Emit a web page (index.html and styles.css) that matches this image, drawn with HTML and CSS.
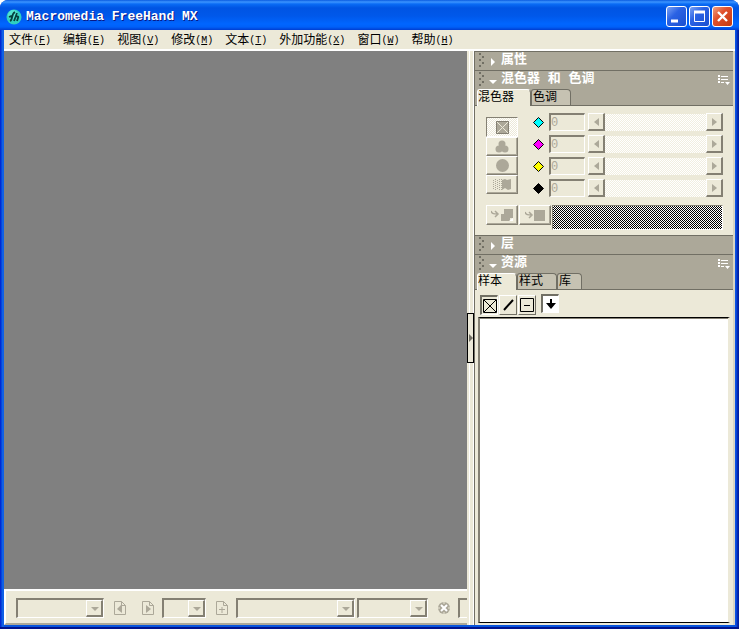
FILE: index.html
```html
<!DOCTYPE html>
<html lang="zh-CN">
<head>
<meta charset="utf-8">
<title>Macromedia FreeHand MX</title>
<link rel="stylesheet" href="styles.css">
</head>
<body>
<div class="window">
  <header class="titlebar">
    <svg class="logo" width="16" height="16" viewBox="0 0 16 16"><circle cx="8" cy="8" r="7.5" fill="#2fd0c0"/><circle cx="7" cy="6" r="5" fill="#6ff0dc" opacity=".6"/><path d="M3 8c2-1 3-1 4-1M4 12c3-1 1-7 5-9M8 12l3-8M9 8c2-1 4-1 3 1l-1 3" fill="none" stroke="#06403c" stroke-width="1.8"/></svg>
    <h1>Macromedia FreeHand MX</h1>
    <button class="caption" aria-label="最小化"><svg width="19" height="19"><path d="M4 14h7" stroke="#fff" stroke-width="3"/></svg></button>
    <button class="caption" aria-label="最大化"><svg width="19" height="19"><path d="M4.500 5v9.500h10V5" fill="none" stroke="#fff"/><path d="M4 5h11" stroke="#fff" stroke-width="3"/></svg></button>
    <button class="caption close" aria-label="关闭"><svg width="19" height="19"><path d="M5 5l9 9M14 5l-9 9" stroke="#fff" stroke-width="2.400"/></svg></button>
  </header>
  <nav class="menubar">
    <a href="#">文件<span>(<u>F</u>)</span></a>
    <a href="#">编辑<span>(<u>E</u>)</span></a>
    <a href="#">视图<span>(<u>V</u>)</span></a>
    <a href="#">修改<span>(<u>M</u>)</span></a>
    <a href="#">文本<span>(<u>T</u>)</span></a>
    <a href="#">外加功能<span>(<u>X</u>)</span></a>
    <a href="#">窗口<span>(<u>W</u>)</span></a>
    <a href="#">帮助<span>(<u>H</u>)</span></a>
  </nav>
  <div class="work">
    <main class="stage">
      <div class="canvas"></div>
      <div class="toolbar">
        <div class="combo c-large"><select aria-label="对象" disabled></select><svg class="drop" width="17" height="17"><path d="M4 6h8l-4 4z"/></svg></div>
        <button class="tool" aria-label="上一页" disabled><svg width="14" height="16"><path class="page" d="M1.500 1.500h7l4 4v9h-11zM8.500 1.500v4h4"/><path class="ink" d="M9 4v9L4 9z"/></svg></button>
        <button class="tool" aria-label="下一页" disabled><svg width="14" height="16"><path class="page" d="M1.500 1.500h7l4 4v9h-11zM8.500 1.500v4h4"/><path class="ink" d="M5 5v8l5-4z"/></svg></button>
        <div class="combo c-page"><select aria-label="页面" disabled></select><svg class="drop" width="17" height="17"><path d="M4 6h8l-4 4z"/></svg></div>
        <button class="tool" aria-label="添加页面" disabled><svg width="14" height="16"><path class="page" d="M1.500 1.500h7l4 4v9h-11zM8.500 1.500v4h4M4 9.500h6M7 7v6"/></svg></button>
        <div class="combo c-font"><select aria-label="字体" disabled></select><svg class="drop" width="17" height="17"><path d="M4 6h8l-4 4z"/></svg></div>
        <div class="combo c-size"><select aria-label="大小" disabled></select><svg class="drop" width="17" height="17"><path d="M4 6h8l-4 4z"/></svg></div>
        <button class="tool" aria-label="停止" disabled><svg width="14" height="14"><circle cx="7" cy="7" r="6" fill="#aca899"/><path d="M4 4l6 6M10 4l-6 6" stroke="#fff" stroke-width="2"/><path d="M7 0v3M7 11v3M0 7h3M11 7h3" stroke="#ece9d8" stroke-width="1"/></svg></button>
        <div class="combo c-large"><select aria-label="缩放" disabled></select></div>
      </div>
    </main>
    <div class="splitter"><button class="grip" aria-label="折叠面板"><svg width="5" height="8"><path d="M1 0v8l4-4z" fill="#716f64"/></svg></button></div>
    <aside class="dock">
      <section>
        <header class="head"><svg class="dots" width="6" height="16"><path d="M1 1h2v2H1zM4 4h2v2H4zM1 7h2v2H1zM4 10h2v2H4zM1 13h2v2H1z"/></svg><svg class="tri" width="8" height="9"><path d="M2 1v8l4-4z"/></svg><h2>属性</h2></header>
      </section>
      <section>
        <header class="head"><svg class="dots" width="6" height="16"><path d="M1 1h2v2H1zM4 4h2v2H4zM1 7h2v2H1zM4 10h2v2H4zM1 13h2v2H1z"/></svg><svg class="tri" width="8" height="9"><path d="M0 4h8l-4 4z"/></svg><h2>混色器 和 色调</h2>
          <button class="options" aria-label="选项"><svg width="12" height="11"><path d="M0 0h2v2H0zM0 3h2v2H0zM0 6h2v2H0zM3 1h7v1H3zM3 4h7v1H3zM3 7h3v1H3zM7 7h5L9.500 10z" fill="#fff"/></svg></button></header>
        <div class="tabs"><button class="tab on t-mixer">混色器</button><button class="tab t-tint">色调</button></div>
        <div class="mixer">
          <div class="modes">
            <button class="raised pressed" aria-label="CMYK" disabled><svg width="13" height="13"><path d="M0 0h13v13H0z" fill="#aca899"/><path d="M1 1l11 11M12 1L1 12" fill="none" stroke="#ece9d8"/><path d="M.500.500h12v12H.500z" fill="none" stroke="#848073"/></svg></button>
            <button class="raised" aria-label="RGB" disabled><svg width="14" height="13"><g fill="#aca899"><circle cx="7" cy="4" r="3.500"/><circle cx="4" cy="9" r="3.500"/><circle cx="10" cy="9" r="3.500"/></g></svg></button>
            <button class="raised" aria-label="HLS" disabled><svg width="13" height="13"><circle cx="6.500" cy="6.500" r="6.500" fill="#aca899"/></svg></button>
            <button class="raised" aria-label="系统颜色" disabled><svg width="18" height="13"><path d="M.500 2v10M2.500 1v11M4.500 2v10M6.500 1v11M8.500 1v11" stroke="#aca899" stroke-dasharray="1 1"/><path d="M9 2l3-1 2 1 4-1v10l-3 1-3-2-3 2z" fill="#aca899"/></svg></button>
          </div>
          <div class="channels">
            <div class="channel"><svg class="gem" width="11" height="11"><path d="M5.500.500l5 5-5 5-5-5z" fill="#0ff" stroke="#000"/></svg><input class="amount" aria-label="青色" value="0" disabled><button class="step" aria-label="减少青色" disabled><svg width="5" height="8"><path d="M5 0v8L0 4z"/></svg></button><input class="range" type="range" aria-label="青色滑块" disabled><button class="step" aria-label="增加青色" disabled><svg width="5" height="8"><path d="M0 0v8l5-4z"/></svg></button></div>
            <div class="channel"><svg class="gem" width="11" height="11"><path d="M5.500.500l5 5-5 5-5-5z" fill="#f0f" stroke="#000"/></svg><input class="amount" aria-label="洋红" value="0" disabled><button class="step" aria-label="减少洋红" disabled><svg width="5" height="8"><path d="M5 0v8L0 4z"/></svg></button><input class="range" type="range" aria-label="洋红滑块" disabled><button class="step" aria-label="增加洋红" disabled><svg width="5" height="8"><path d="M0 0v8l5-4z"/></svg></button></div>
            <div class="channel"><svg class="gem" width="11" height="11"><path d="M5.500.500l5 5-5 5-5-5z" fill="#ff0" stroke="#000"/></svg><input class="amount" aria-label="黄色" value="0" disabled><button class="step" aria-label="减少黄色" disabled><svg width="5" height="8"><path d="M5 0v8L0 4z"/></svg></button><input class="range" type="range" aria-label="黄色滑块" disabled><button class="step" aria-label="增加黄色" disabled><svg width="5" height="8"><path d="M0 0v8l5-4z"/></svg></button></div>
            <div class="channel"><svg class="gem" width="11" height="11"><path d="M5.500.500l5 5-5 5-5-5z" fill="#000" stroke="#000"/></svg><input class="amount" aria-label="黑色" value="0" disabled><button class="step" aria-label="减少黑色" disabled><svg width="5" height="8"><path d="M5 0v8L0 4z"/></svg></button><input class="range" type="range" aria-label="黑色滑块" disabled><button class="step" aria-label="增加黑色" disabled><svg width="5" height="8"><path d="M0 0v8l5-4z"/></svg></button></div>
          </div>
          <div class="apply">
            <button class="raised" aria-label="添加到样本" disabled><svg width="22" height="14"><path d="M0 3c1 3 3 3 7 3M4 3l3 3-3 3" fill="none" stroke="#aca899" stroke-width="1.500"/><path d="M13 1h9v9h-3v3h-9V6h3z" fill="#aca899"/><path d="M18 13l4-3v3z" fill="#fff"/></svg></button>
            <button class="raised" aria-label="应用颜色" disabled><svg width="20" height="13"><path d="M0 3c1 3 3 3 7 3M4 3l3 3-3 3" fill="none" stroke="#aca899" stroke-width="1.500"/><path d="M9 1h11v11H9z" fill="#aca899"/></svg></button>
            <div class="swatch"></div>
          </div>
        </div>
      </section>
      <section>
        <header class="head"><svg class="dots" width="6" height="16"><path d="M1 1h2v2H1zM4 4h2v2H4zM1 7h2v2H1zM4 10h2v2H4zM1 13h2v2H1z"/></svg><svg class="tri" width="8" height="9"><path d="M2 1v8l4-4z"/></svg><h2>层</h2></header>
      </section>
      <section class="assets">
        <header class="head"><svg class="dots" width="6" height="16"><path d="M1 1h2v2H1zM4 4h2v2H4zM1 7h2v2H1zM4 10h2v2H4zM1 13h2v2H1z"/></svg><svg class="tri" width="8" height="9"><path d="M0 4h8l-4 4z"/></svg><h2>资源</h2>
          <button class="options" aria-label="选项"><svg width="12" height="11"><path d="M0 0h2v2H0zM0 3h2v2H0zM0 6h2v2H0zM3 1h7v1H3zM3 4h7v1H3zM3 7h3v1H3zM7 7h5L9.500 10z" fill="#fff"/></svg></button></header>
        <div class="tabs"><button class="tab on t-swatch">样本</button><button class="tab t-style">样式</button><button class="tab t-lib">库</button></div>
        <div class="picks">
          <button class="pick chosen" aria-label="填充和笔触"><svg width="14" height="14"><path d="M.500.500h13v13H.500zM1 1l12 12M13 1L1 13" fill="none" stroke="#000"/></svg></button>
          <button class="pick" aria-label="笔触"><svg width="14" height="14"><path d="M3 12L12 2" stroke="#000" stroke-width="2"/></svg></button>
          <button class="pick" aria-label="填充"><svg width="14" height="14"><path d="M.500.500h13v13H.500zM4 7.500h6" fill="none" stroke="#000"/></svg></button>
          <button class="pick well" aria-label="拖放"><svg width="10" height="10"><path d="M4 0h2v4h4L5 10 0 4h4z"/></svg></button>
        </div>
        <div class="list"></div>
      </section>
    </aside>
  </div>
</div>
</body>
</html>
```
FILE: styles.css
```css
* { box-sizing: border-box; }
body {
  margin: 0;
  background: #fff;
  color: #000;
  font: 12px/16px "Liberation Mono", "Noto Sans CJK SC", monospace;
}
button, input, select {
  margin: 0;
  padding: 0;
  border: 0;
  border-radius: 0;
  background: none;
  color: inherit;
  font: inherit;
}
svg { display: block; flex: none; }
h1, h2 { margin: 0; }

.window {
  display: flex;
  flex-direction: column;
  height: 100vh;
  padding: 0 4px 4px;
  border-radius: 8px 8px 0 0;
  background: linear-gradient(90deg, #0019cf, #0855dd 2px, #166aee 3px, #0855dd 4px, #0855dd calc(100% - 4px), #0a4fe8 calc(100% - 3px), #001ea0 calc(100% - 1px));
  box-shadow: inset 0 -2px #00138c;
  overflow: hidden;
}
.titlebar {
  display: flex;
  align-items: center;
  gap: 2px;
  height: 30px;
  margin: 0 -4px;
  padding: 3px 6px 0;
  background: linear-gradient(#0a5be0 0, #3c95ff 2px, #0a6cf5 4px, #0054e3 8px, #0058ea 16px, #0066ff 24px, #0060f8 27px, #003dd0 30px);
}
.titlebar h1 {
  flex: 1;
  padding-left: 2px;
  color: #fff;
  font: bold 13px/16px "Liberation Mono", monospace;
  text-shadow: 1px 1px #0a1883;
}
.caption {
  display: grid;
  place-items: center;
  width: 21px;
  height: 21px;
  border: 1px solid #fff;
  border-radius: 3px;
  background: linear-gradient(135deg, #7ba2f4, #2a62e4 40%, #1a4fd0);
}
.close { background: linear-gradient(135deg, #f0a080, #e0502c 40%, #c43a10); }

.menubar {
  display: flex;
  align-items: center;
  gap: 12px;
  height: 21px;
  padding: 2px 5px 0;
  border-bottom: 2px solid #fff;
  background: #ece9d8;
}
.menubar a { display: flex; color: #000; text-decoration: none; white-space: nowrap; }
.menubar span { font-size: 10px; }

.work {
  flex: 1;
  display: grid;
  grid-template-columns: minmax(0, 1fr) 7px 261px;
  min-height: 0;
  background: #ece9d8;
}
.stage { display: flex; flex-direction: column; min-width: 0; }
.canvas { flex: 1; background: #808080; }
.toolbar {
  display: flex;
  align-items: center;
  gap: 2px;
  height: 36px;
  padding: 2px 0 0 10px;
  border-top: 2px solid #fff;
  border-left: 2px solid #fff;
  border-bottom: 2px solid #aca899;
  overflow: hidden;
}
.combo {
  display: flex;
  flex: none;
  height: 20px;
  border: solid;
  border-width: 2px 1px 1px 2px;
  border-color: #848073 #fff #fff #848073;
}
.combo select { flex: 1; min-width: 0; appearance: none; }
.c-large { width: 88px; }
.c-page { width: 44px; }
.c-font { width: 119px; }
.c-size { width: 71px; }
.drop {
  border: solid;
  border-width: 1px 2px 2px 1px;
  border-color: #fff #848073 #848073 #fff;
  fill: #aca899;
}
.tool { flex: none; padding: 0 5px 0 7px; }
.page { fill: none; stroke: #aca899; }
.ink { fill: #aca899; }

.splitter {
  display: flex;
  align-items: center;
  border-right: 1px solid #fff;
  background: linear-gradient(90deg, #ece9d8 2px, #fff 2px, #fff 3px, #ece9d8 3px);
}
.grip {
  display: grid;
  place-items: center;
  flex: none;
  width: 7px;
  height: 50px;
  border: 1px solid #000;
  background: #ece9d8;
}

.dock {
  display: flex;
  flex-direction: column;
  min-width: 0;
  border-left: 1px solid #716f64;
  border-right: 2px solid #d8d4c4;
}
.head {
  display: flex;
  align-items: center;
  height: 19px;
  padding: 0 3px 2px;
  border-top: 1px solid #716f64;
  background: #aca899;
  color: #fff;
}
.head h2 { flex: 1; font-size: 13px; line-height: 16px; }
.dots { margin-right: 5px; fill: #716f64; }
.tri { margin: 2px 4px 0 0; fill: #fff; }
.options { padding-top: 3px; }
.tabs {
  display: flex;
  height: 17px;
  padding: 0 2px;
  border-bottom: 1px solid #716f64;
  background: #aca899;
}
.tab {
  height: 16px;
  padding: 0 1px;
  border: 1px solid #716f64;
  border-bottom: 0;
  border-radius: 3px 4px 0 0;
  background: #c6c2b2;
  line-height: 14px;
  text-align: left;
  white-space: nowrap;
}
.tab.on { height: 17px; padding: 0; border-color: #fff #716f64 #fff #fff; background: #ece9d8; }
.t-mixer { width: 54px; }
.t-tint, .t-swatch, .t-style { width: 40px; }
.t-lib { width: 25px; }

.mixer {
  display: grid;
  grid-template-columns: 32px minmax(0, 1fr);
  gap: 8px 15px;
  padding: 7px 10px 5px 11px;
}
.modes { display: flex; flex-direction: column; padding-top: 4px; }
.raised {
  display: grid;
  place-items: center;
  width: 32px;
  height: 20px;
  border: 1px solid;
  border-color: #fff #848073 #848073 #fff;
  box-shadow: inset -1px -1px #aca899;
}
.modes .raised { height: 19px; }
.modes .pressed {
  height: 20px;
  border-color: #848073 #fff #fff #848073;
  background: repeating-conic-gradient(#fff 0 25%, #ece9d8 0 50%) 0 0 / 2px 2px;
  box-shadow: none;
}
.channels { display: flex; flex-direction: column; gap: 4px; }
.channel { display: flex; align-items: center; height: 18px; }
.gem { margin-right: 5px; }
.amount {
  width: 36px;
  height: 18px;
  margin-right: 3px;
  border: solid;
  border-width: 2px 1px 1px 2px;
  border-color: #848073 #fff #fff #848073;
  color: #aca899;
}
.step {
  display: grid;
  place-items: center;
  width: 17px;
  height: 18px;
  border: solid;
  border-width: 1px 2px 2px 1px;
  border-color: #fff #848073 #848073 #fff;
  fill: #aca899;
}
.range {
  flex: 1;
  min-width: 0;
  height: 17px;
  appearance: none;
  background: repeating-conic-gradient(#fff 0 25%, #f1eee0 0 50%) 0 0 / 2px 2px;
}
.range::-webkit-slider-thumb { appearance: none; width: 0; height: 0; }
.apply { grid-column: 1 / -1; display: flex; gap: 1px; }
.swatch {
  flex: 1;
  height: 25px;
  border: 1px solid;
  border-color: #848073 #fff #fff #848073;
  background: repeating-conic-gradient(#000 0 25%, #fff 0 50%) 0 0 / 2px 2px;
}

.assets { flex: 1; display: flex; flex-direction: column; min-height: 0; }
.picks { display: flex; padding: 4px 5px 2px; }
.pick {
  display: grid;
  place-items: center;
  width: 18px;
  height: 20px;
  margin: 1px 1px 0 0;
  border: 1px solid;
  border-color: #fff #716f64 #716f64 #fff;
}
.chosen, .well { border-width: 2px 1px 1px 2px; border-color: #716f64 #fff #fff #716f64; }
.well { height: 19px; margin: 0 0 0 4px; background: #fff; }
.list {
  flex: 1;
  margin: 0 3px 2px;
  border: solid;
  border-width: 1px 2px 1px 2px;
  border-color: #000 #ece9d8 #000 #848073;
  background: #fff;
  box-shadow: inset 0 1px #848073;
}
```
